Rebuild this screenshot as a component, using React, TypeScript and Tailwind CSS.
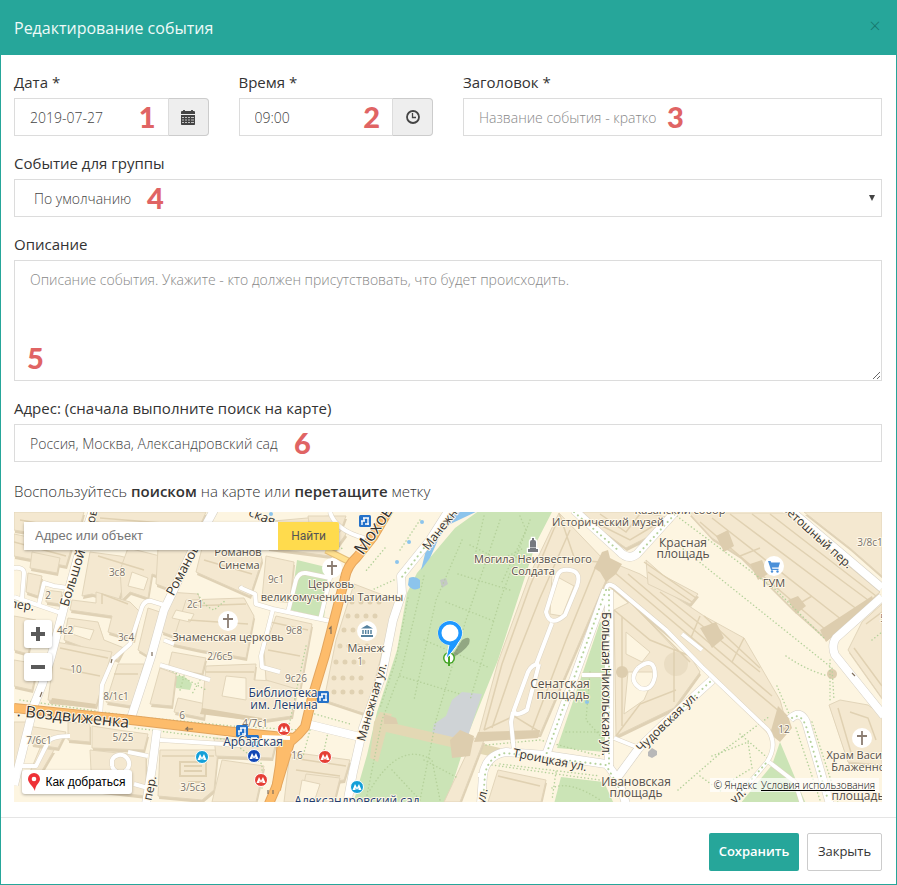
import type { ReactNode } from "react";

const INPUT =
  "block w-full h-[38px] border border-[#dcdcdc] bg-white px-[15px] text-[14px] font-light text-[#444] placeholder:text-[#888] outline-none";

function Marker({ children, className }: { children: ReactNode; className: string }) {
  return (
    <span
      className={`pointer-events-none absolute font-['Lato'] text-[29px] leading-[38px] font-black text-[#e06464] ${className}`}
    >
      {children}
    </span>
  );
}

function Field({ id, label, children }: { id: string; label: string; children: ReactNode }) {
  return (
    <div>
      <label htmlFor={id} className="mb-[7px] block text-[15px] leading-[18px] text-[#333]">
        {label}
      </label>
      <div className="relative flex">{children}</div>
    </div>
  );
}

function CalendarIcon() {
  return (
    <svg width="14" height="15" viewBox="0 0 14 15" fill="#444" aria-hidden="true">
      <path d="M0 2.2Q0 1 1 1H2V.5Q2 0 2.500 0h1Q4 0 4 .5V1h6V.5q0-.5.5-.5h1q.5 0 .5.5V1h1q1 0 1 1.200V4H0z" />
      <path d="M0 5h14v9.200q0 .8-.8.8H.8Q0 15 0 14.200z" />
      <path
        d="M1 7.500h2M4 7.500h2M7 7.500h2M10 7.500h3M1 10h2M4 10h2M7 10h2M10 10h3M1 12.500h2M4 12.500h2M7 12.500h2M10 12.500h3"
        stroke="#d0d0d0"
        strokeWidth=".9"
      />
    </svg>
  );
}

function ClockIcon() {
  return (
    <svg width="14" height="14" viewBox="0 0 14 14" fill="none" stroke="#444" aria-hidden="true">
      <circle cx="7" cy="7" r="6" strokeWidth="1.800" />
      <path d="M6.500 3v4.500H10" strokeWidth="1.300" />
    </svg>
  );
}

/* Block outlines of the districts, in map coordinates */
const BLOCKS = [
  "14,512 84,512 76,540 14,530",
  "14,534 72,546 66,566 14,556",
  "32,552 60,558 57,573 30,568",
  "28,573 42,576 38,596 26,592",
  "46,590 62,592 60,604 46,602",
  "96,512 206,512 198,530 120,528 92,520",
  "90,552 120,556 150,564 144,590 124,584 118,602 92,594 82,596",
  "128,548 176,560 170,580 152,574 148,598 130,592 122,600 120,570",
  "72,600 96,603 96,592 130,602 140,612 134,640 108,632 112,616 70,610",
  "68,618 98,622 104,640 124,648 118,660 64,640",
  "148,608 160,612 148,656 138,650",
  "56,642 112,652 96,706 48,700",
  "118,664 144,664 132,706 106,702",
  "14,616 36,620 28,654 14,650",
  "14,660 38,664 32,690 14,686",
  "158,548 180,530 190,545 172,590 156,584",
  "206,532 258,540 262,560 250,596 196,572",
  "168,592 198,594 204,612 184,640 162,632",
  "186,600 244,598 254,616 246,658 200,650 172,644",
  "172,652 206,658 202,674 168,668",
  "160,668 176,674 172,706 150,704",
  "178,698 206,704 204,718 174,712",
  "206,666 256,664 254,680 298,682 292,716 264,720 202,710",
  "262,522 330,516 346,534 330,556 268,548",
  "266,556 294,562 290,600 262,598",
  "276,616 312,624 300,690 266,680 264,650",
  "308,516 346,516 340,532 310,530",
  "14,722 26,722 20,760 14,766",
  "28,726 66,732 58,748 32,744",
  "68,722 90,724 90,742 68,740",
  "92,726 118,730 148,734 144,750 92,748",
  "90,750 146,756 146,796 92,790",
  "40,748 54,750 40,774 30,772",
  "160,750 218,750 214,790 202,800 158,796",
  "222,760 264,766 256,802 212,802",
  "214,738 276,742 272,758 216,756",
  "290,752 350,760 344,780 326,782 320,802 284,802",
  "354,584 396,600 366,714 324,700 336,640",
  "306,774 340,778 334,802 300,802",
  "576,512 640,512 672,518 650,536 626,548",
  "559,513 604,560 606,580 540,734 478,736 498,662 530,574",
  "606,560 640,574 662,588 704,616 744,638 780,700 786,722 770,734 702,664 608,584",
  "614,610 630,602 676,650 690,656 700,672 674,708 616,736",
  "689,513 785,513 880,592 826,638 792,608 740,556 712,538",
  "804,512 882,512 882,576 850,548",
  "882,604 862,622 848,650 882,698",
  "829,705 840,700 868,705 882,715 882,765 848,762",
  "646,560 664,576 698,594 690,604 648,584",
  "498,770 546,780 541,802 488,802",
  "474,738 484,740 460,802 444,802",
];

const COURTS = [
  "132,572 148,578 144,590 128,586",
  "626,632 650,652 642,662 626,654",
  "628,672 656,672 644,700 624,714",
  "176,610 194,614 190,622 172,618",
  "226,676 246,678 246,700 222,696",
  "302,780 320,784 314,802 298,802",
  "74,626 94,630 90,640 72,634",
  "552,574 574,586 562,616 550,614",
];

const RIDGES = [
  "M556 524 530 586 502 664 484 730M570 530 540 598 514 664 492 728M596 566 566 640 532 730M559 513 575 560 600 562M484 730 514 716 540 732",
  "M700 522 826 630M712 518 842 620M730 514 858 610M752 514 868 600M770 514 876 596M740 556 760 548M792 608 812 596",
  "M614 572 780 712M628 574 772 696M660 592 760 672M700 616 690 640M744 638 732 662M704 616 760 668",
  "M614 610 650 640 690 656M630 602 690 662M616 736 640 704 676 690M622 616V726M674 650V702",
  "M644 562 696 598M648 572 692 602M866 624 882 612M854 648 882 686",
  "M100 518 200 526M98 556 144 570M20 520 78 530M60 648 108 658M210 540 256 550M204 560 252 574M190 606 246 604",
  "M206 672 254 672M270 622 308 630M268 650 300 656M292 758 346 766M296 770 340 776M162 756 214 756M498 776 540 786",
  "M102 604 102 594 128 604M188 620 248 624M60 668 100 676M114 674 138 674M14 542 66 556M270 526 330 524",
  "M850 712 868 718 876 740M838 708 852 756M586 518 630 540 660 522M600 514 626 532 640 514",
];

const LANES = [
  "M93 510 79 553 64 607 51 657 42 685 34 705 14 785",
  "M214 510 194 547 164 610 151 657 131 718",
  "M157 730 152 768 146 804",
  "M449 510 430 540 401 576 402 593 393 620 382 675 363 728 353 772 347 804",
  "M307 724 360 737",
  "M574 510 619 551Q628 561 637 554L675 512",
  "M790 510 882 588M882 597 836 638Q831 645 835 655L884 716",
  "M606 590 546 755M609 590V768",
  "M481 804 483 775Q486 755 506 752L546 755 606 764Q618 775 626 804",
  "M617 778 639 748 666 722 712 680",
  "M790 719Q800 709 806 722L830 804",
];

const PATHS = [
  "M606 592 Q606 580 616 588L666 630 702 667 768 730Q778 745 767 762L735 800",
  "M14 568Q24 567 24 573L22 598M14 597 61 613M39 604 44 583 54 586 68 588",
  "M114 657 102 685 100 718M112 660 130 644 142 607Q145 600 151 601L164 605",
  "M243 587 241 588 255 594 256 604 273 609 330 621M288 612 296 580Q299 572 306 573L330 578 320 620M273 609 261 656 262 667 280 672",
  "M160 665 210 680M164 640 174 644M160 740 240 745 290 738",
  "M20 766 36 766 48 742Q52 736 70 736M134 784 148 788M128 752 148 756",
  "M563 570Q583 568 577 586L565 615Q550 628 546 612L556 580Q558 571 563 570M552 623 536 665M539 664 527 710Q514 718 514 710L528 672Q532 664 539 664M513 712 511 722 514 752",
  "M582 675H609M614 738 639 748M769 762 795 782 802 804M682 634 702 650",
  "M638 668Q655 655 655 676 652 692 640 688 628 680 638 668M478 775 483 775",
  "M330 512Q335 530 364 538",
  "M112 766V760A9 9 0 1 1 124 772A9 9 0 0 1 112 766",
];

const DOTS = [
  "M408 598 396 660 380 708M424 576 416 610 402 668 382 720 366 800M462 540 436 600 414 700M500 520 466 620 436 720 420 800M530 520 500 600 470 700",
  "M470 545 500 560 524 548M458 574 510 590M446 602 496 622M424 640 490 668M400 676 460 694M520 516 526 530 502 582M484 516 474 560",
  "M370 790Q400 740 432 760L440 800M424 760 458 778M392 770 420 800M394 580 372 590M385 548 365 572M420 520 400 550",
  "M672 540 832 668 834 700M674 514 776 590 826 640M830 660V700M777 686 790 716M786 656Q806 670 828 676",
  "M486 745 540 740 600 756M492 765 600 780M556 772 552 800M500 764 600 776",
  "M606 595 548 752M566 732H604M590 672 586 720 606 742M552 788Q570 780 600 800",
  "M678 790 724 750 770 716M700 776 722 792M712 756 748 742 752 768 716 790M740 734 770 760",
  "M20 700 130 716 232 726 300 730M135 728 230 740M198 594Q204 606 214 610L226 600",
  "M306 646 288 730M336 600 312 690 308 712 350 724M310 730 302 760M328 732 322 760M336 586 356 588",
  "M330 540 344 550M232 742 262 764 262 790M796 728 820 800M812 722 838 802M872 640 882 632",
  "M170 670 206 690M184 676 180 690M200 680 192 694",
];

const WALK = "stroke-[#b5d19b]";

const HALO = {
  paintOrder: "stroke",
  stroke: "#fff8e8",
  strokeWidth: 2,
  strokeLinejoin: "round",
} as const;

type Label = [text: string, x: number, y: number, size: number, angle?: number];

const PLACES: Label[] = [
  ["Романов", 238, 556, 11],
  ["Синема", 239, 569, 11],
  ["Церковь", 331, 588, 11],
  ["великомученицы Татианы", 332, 601, 11],
  ["Знаменская церковь", 228, 641, 11],
  ["Манеж", 366, 652, 11],
  ["Исторический музей", 608, 526, 11],
  ["Казанский собор", 680, 514, 11],
  ["Могила Неизвестного", 533, 563, 11],
  ["Солдата", 533, 575, 11],
  ["Красная", 683, 547, 12],
  ["площадь", 683, 558, 12],
  ["ГУМ", 774, 587, 11],
  ["Сенатская", 560, 688, 12],
  ["площадь", 563, 699, 12],
  ["Ивановская", 636, 786, 12],
  ["площадь", 636, 797, 12],
  ["Храм Василия", 864, 759, 11],
  ["Блаженного", 864, 771, 11],
  ["площадь", 858, 800, 12],
];

const STREETS: Label[] = [
  ["ов", 92, 520, 12, -76],
  ["Большой", 73, 582, 13, -73],
  ["Романов", 183, 574, 13, -62],
  ["пер.", 22, 609, 12, 8],
  ["пер.", 150, 792, 12, -78],
  [". Воздвиженка", 73, 722, 16, 6],
  ["ская", 262, 521, 13, 22],
  ["Мохов", 375, 535, 17, -56],
  ["Манежная", 444, 528, 12, -52],
  ["Манежная ул.", 372, 706, 12, -74],
  ["Большая Никольская ул.", 606, 688, 12, 90],
  ["Троицкая ул.", 550, 764, 12, 11],
  ["Чудовская ул.", 667, 726, 12, -44],
  ["Ветошный пер.", 817, 540, 12, 42],
  ["ул.", 738, 800, 12, -42],
  ["ул.", 482, 800, 12, -76],
];

const NUMBERS: Label[] = [
  ["3с8", 117, 576, 10],
  ["9с1", 276, 583, 10],
  ["2с1", 195, 608, 10],
  ["2", 48, 599, 10],
  ["4с2", 65, 634, 10],
  ["3с4", 126, 641, 10],
  ["9с8", 294, 634, 10],
  ["2/6с5", 220, 660, 10],
  ["10", 76, 673, 10],
  ["9с26", 296, 682, 10],
  ["8/1с1", 116, 700, 10],
  ["6", 182, 719, 10],
  ["4/7с1", 255, 727, 10],
  ["7/6с1", 39, 744, 10],
  ["5/25", 123, 741, 10],
  ["16", 297, 759, 10],
  ["3/5с3", 193, 791, 10],
  ["1", 360, 665, 10],
  ["12", 784, 733, 10],
  ["3/8с1", 870, 546, 10],
  ["5", 883, 622, 10],
];

const STATIONS: Label[] = [
  ["Библиотека", 283, 697, 12],
  ["им. Ленина", 284, 709, 12],
  ["Арбатская", 253, 746, 12],
  ["Александровский сад", 357, 805, 12],
];

function Labels({ items, fill }: { items: Label[]; fill: string }) {
  return (
    <g fill={fill} textAnchor="middle">
      {items.map(([text, x, y, size, angle]) => (
        <text
          key={`${text}-${x}-${y}`}
          x={x}
          y={y}
          fontSize={size}
          transform={angle ? `rotate(${angle} ${x} ${y - 4})` : undefined}
          {...HALO}
        >
          {text}
        </text>
      ))}
    </g>
  );
}

const METRO: [number, number, string][] = [
  [284, 729, "#e53e35"],
  [325, 757, "#e53e35"],
  [261, 780, "#e53e35"],
  [254, 756, "#1147b5"],
  [202, 757, "#139fd8"],
  [357, 787, "#139fd8"],
];

const CROSSES: [number, number][] = [
  [332, 568],
  [228, 621],
  [862, 738],
];

const UNDERPASSES: [number, number][] = [
  [365, 521],
  [323, 697],
  [242, 731],
  [253, 741],
];

function CityMap() {
  return (
    <svg
      viewBox="14 512 868 290"
      preserveAspectRatio="xMidYMid slice"
      className="block h-full w-full font-['Open_Sans']"
      role="img"
      aria-label="Карта"
    >
      <rect x="14" y="512" width="868" height="290" fill="#fdf5e1" />
      <g fill="#cbe4b6">
        <path d="M455 528 417 573 407 593 397 650 377 712 367 755 353 804H446L469 732 498 660 536 543 553 510H480z" />
        <path d="M297 560 330 568 324 618 290 610z" />
        <path d="M600 622 607 625 605 752 557 748 583 672z" />
        <path d="M561 777 604 782 614 804H554z" />
        <path d="M780 742 806 804H740L772 765z" />
        <path d="M175 676Q185 674 192 684L190 690 176 688z" />
      </g>
      <path d="M480 510 446 526 438 540 430 558 421 570 426 550 434 530 444 516 456 510z" fill="#8cc4ec" />
      <path d="M409 578Q415 575 420 580V588Q413 592 408 585z" fill="#8cc4ec" />
      <g fill="#8cc4ec">
        <circle cx="271" cy="514" r="2" />
        <circle cx="422" cy="522" r="2" />
        <circle cx="409" cy="542" r="2" />
        <circle cx="397" cy="562" r="2" />
        <circle cx="587" cy="702" r="2" />
      </g>
      <path d="M462 692 482 694 466 742 430 742 434 724 446 716 452 700z" fill="#cfd3d6" />
      <path d="M440 580 446 578 448 584 442 588z" fill="#c4c9c4" />
      <path d="M380 712 392 714 388 722 500 748 498 758 386 732 378 762 370 758 374 722z" fill="#e3d8b4" />

      <g fill="#dfd1b5" transform="translate(1 3)">
        {BLOCKS.map((points) => (
          <polygon key={points} points={points} />
        ))}
      </g>
      <g fill="#f4e8d0" stroke="#e2d5ba" strokeWidth="1">
        {BLOCKS.map((points) => (
          <polygon key={points} points={points} />
        ))}
      </g>
      <g fill="#fdf5e1" stroke="#e2d5ba" strokeWidth="1">
        {COURTS.map((points) => (
          <polygon key={points} points={points} />
        ))}
      </g>
      <g fill="none" stroke="#e0d1b2" strokeWidth="1.500">
        {RIDGES.map((d) => (
          <path key={d} d={d} />
        ))}
      </g>
      <g fill="#ddcdae">
        <path d="M52 698 96 704 95 708 50 704zM202 708 262 718 262 722 200 714zM478 732 540 730 538 738 474 742z" />
        <path d="M602 552 608 550 610 558 622 564 616 574 606 582 600 572 594 568zM778 706 788 716 792 728 780 742 770 734z" />
        <path d="M460 730 474 736 470 756 452 758 450 740zM700 628 716 622 724 638 712 648z" />
        <path d="M716 536 728 530 734 546 724 552zM750 564 762 560 768 574 758 580zM788 600 798 596 806 606 796 614z" />
        <path d="M820 630 872 596 874 602 826 642zM384 714 396 718 398 724 384 724z" />
        <circle cx="622" cy="672" r="6" />
        <circle cx="832" cy="674" r="5" />
        <circle cx="676" cy="664" r="12" opacity=".4" />
      </g>
      <path
        d="M352 602h34M348 616h34M344 630h36M340 646h34M336 662h34M334 678h32M334 692h28"
        stroke="#e0d1b2"
        strokeWidth="5"
        strokeDasharray="0 9"
        strokeLinecap="round"
      />
      <path d="M180 762h26v14h-26zM184 766h18M184 771h18M188 782h14" fill="none" stroke="#e0d1b2" strokeWidth="2" />

      <g fill="none" strokeWidth="1.500" strokeLinecap="round" strokeDasharray="0.100 3.500" className={WALK}>
        {DOTS.map((d) => (
          <path key={d} d={d} />
        ))}
      </g>

      <g fill="none" strokeLinejoin="round">
        <g stroke="#ddd4c2" strokeWidth="5">
          {PATHS.map((d) => (
            <path key={d} d={d} />
          ))}
        </g>
        <g stroke="#d6d0c4" strokeWidth="9">
          {LANES.map((d) => (
            <path key={d} d={d} />
          ))}
        </g>
        <g stroke="#fff" strokeWidth="4">
          {PATHS.map((d) => (
            <path key={d} d={d} />
          ))}
        </g>
        <g stroke="#fff" strokeWidth="8">
          {LANES.map((d) => (
            <path key={d} d={d} />
          ))}
        </g>
        <g strokeWidth="2" strokeLinecap="round" strokeDasharray="0.100 5" className={WALK}>
          <path d="M606 590 546 755M609 590V768M483 800 485 775Q488 756 506 753L606 765 626 800M639 748 712 680M430 540 402 577M792 718Q800 712 806 726L828 800M735 798 767 762M574 512 619 551M640 552 675 514" />
        </g>
        <path d="M326 550 350 562" stroke="#e5be78" strokeWidth="7" />
        <path d="M326 550 350 562" stroke="#ffe08f" strokeWidth="5" />
        <g stroke="#e3a55e" strokeWidth="10">
          <path d="M390 508 373 537 357 557Q347 566 345 578L325 655 312 698 305 727Q299 735 290 742L277 785 268 806M14 708 131 720 234 732 294 738" />
          <path d="M282 738 280 765 276 790" />
        </g>
        <g stroke="#fdbc6b" strokeWidth="8">
          <path d="M390 508 373 537 357 557Q347 566 345 578L325 655 312 698 305 727Q299 735 290 742L277 785 268 806M14 708 131 720 234 732 294 738" />
          <path d="M282 738 280 765 276 790" />
        </g>
        <path d="M262 737 290 738" stroke="#fff" strokeWidth="4" />
      </g>
      <path
        d="M193 729h-7l2 -2M188 731l-2 -3M331 634v-7l-2 2M268 790v4M273 790v4M40 697l2 -5M111 663l1 -4M152 656v-4M852 673l3 3"
        stroke="#806f5b"
        strokeWidth="1.200"
        fill="none"
      />

      <Labels items={NUMBERS} fill="#76716b" />
      <Labels items={STREETS} fill="#34322f" />

      {UNDERPASSES.map(([x, y]) => (
        <g key={`${x}-${y}`} transform={`translate(${x} ${y})`}>
          <rect x="-6" y="-6" width="12" height="12" rx="1.500" fill="#2572c9" />
          <path d="M-2-3h6M-1-3v3M3-3v7M-4 0h4M0 3h4M-3 0v4" stroke="#fff" strokeWidth="1.400" fill="none" />
        </g>
      ))}
      <Labels items={STATIONS} fill="#223c70" />
      {METRO.map(([x, y, color]) => (
        <g key={`${x}-${y}`} transform={`translate(${x} ${y})`}>
          <circle r="6.500" fill={color} stroke="#fff" />
          <path d="M-4.500 3-2-3 0 .8 2-3 4.500 3H1.500L1.300.8 0 3-1.300.8-1.500 3z" fill="#fff" />
        </g>
      ))}
      {CROSSES.map(([x, y]) => (
        <g key={`${x}-${y}`} transform={`translate(${x} ${y})`}>
          <circle r="10" fill="#fff" />
          <path d="M0-7V7M-5-2H5" stroke="#8b7d72" strokeWidth="1.800" />
        </g>
      ))}
      <g transform="translate(367 631)">
        <circle r="10" fill="#fff" />
        <path d="M-6-2.500 0-6 6-2.500zM-6 4H6V6H-6z" fill="#56829f" />
        <path d="M-4-1V3M-1.300-1V3M1.300-1V3M4-1V3" stroke="#56829f" strokeWidth="1.500" />
      </g>
      <g transform="translate(774 566)">
        <circle r="10" fill="#fff" />
        <path d="M-6-5h2.500l.8 1.500H6L4.500 1.500H-2l.3 1.200H4.500V4H-3z" fill="#4a90d9" />
        <circle cx="-2" cy="5.500" r="1.200" fill="#4a90d9" />
        <circle cx="3.500" cy="5.500" r="1.200" fill="#4a90d9" />
      </g>
      <g transform="translate(533 545)" stroke="#fff" strokeWidth="2.500" paintOrder="stroke" fill="#77797f">
        <path d="M-5 4V7H5V4H3V-3Q3-5 1-5V-7H-1V-5Q-3-5-3-3V4z" />
        <path d="M-4 2.500H4V3H-4z" stroke="none" fill="#fff" />
      </g>
      <path d="M648 752l4-4 5 3v4l-5 3-4-2z" fill="#b8b8b8" />
      <Labels items={PLACES} fill="#55504b" />

      <g>
        <path d="M450 659 462 640Q472 634 469 644 464 652 450 659z" fill="#3d4a36" opacity=".4" />
        <circle cx="449" cy="658" r="6" fill="#46a528" />
        <circle cx="449" cy="658" r="4.500" fill="#fff" />
        <path d="M449 656 449 666" stroke="#46a528" strokeWidth="2" />
        <path
          d="M446 659 449 645A12 12 0 1 1 460 640Q457 646 452 652z"
          fill="#1e98ff"
          stroke="#fff"
          strokeWidth="1"
        />
        <circle cx="450" cy="633" r="12" fill="#1e98ff" />
        <circle cx="450" cy="633" r="8.500" fill="#fff" />
      </g>
    </svg>
  );
}

const OVERLAY = "absolute flex items-center justify-center rounded-[3px] bg-white shadow-[0_1px_3px_rgba(0,0,0,0.3)]";

export default function App() {
  return (
    <form
      className="flex w-full flex-col border border-[#26a69a] bg-white font-['Open_Sans','Noto_Sans',sans-serif]"
      onSubmit={(event) => event.preventDefault()}
    >
      <header className="flex h-[54px] items-center justify-between bg-[#26a69a] px-[13px]">
        <h1 className="text-[16px] leading-[24px] text-[#eefaf8]">Редактирование события</h1>
        <button
          type="button"
          aria-label="Закрыть окно"
          className="flex h-[24px] w-[16px] items-start justify-center text-[20px] leading-[20px] font-light text-[#17766d]"
        >
          ×
        </button>
      </header>

      <main className="flex flex-col gap-[18px] pt-[18px] pr-[14px] pb-[15px] pl-[13px]">
        <div className="grid grid-cols-4 gap-x-[30px]">
          <Field id="date" label="Дата *">
            <input id="date" defaultValue="2019-07-27" className={`${INPUT} min-w-0 flex-1`} />
            <button
              type="button"
              aria-label="Выбрать дату"
              className="flex h-[38px] w-[40px] shrink-0 items-center justify-center rounded-r-[4px] border border-l-0 border-[#ccc] bg-[#eee]"
            >
              <CalendarIcon />
            </button>
            <Marker className="right-[53px]">1</Marker>
          </Field>
          <Field id="time" label="Время *">
            <input id="time" defaultValue="09:00" className={`${INPUT} min-w-0 flex-1`} />
            <button
              type="button"
              aria-label="Выбрать время"
              className="flex h-[38px] w-[40px] shrink-0 items-center justify-center rounded-r-[4px] border border-l-0 border-[#ccc] bg-[#eee]"
            >
              <ClockIcon />
            </button>
            <Marker className="right-[53px]">2</Marker>
          </Field>
          <div className="col-span-2">
            <Field id="title" label="Заголовок *">
              <input id="title" placeholder="Название события - кратко" className={INPUT} />
              <Marker className="left-[204px]">3</Marker>
            </Field>
          </div>
        </div>

        <Field id="group" label="Событие для группы">
          <select
            id="group"
            className="block h-[38px] w-full appearance-none border border-[#dcdcdc] bg-white px-[19px] text-[14px] font-light text-[#444] outline-none"
          >
            <option>По умолчанию</option>
          </select>
          <Marker className="left-[133px]">4</Marker>
          <svg
            width="6"
            height="6"
            viewBox="0 0 6 6"
            className="pointer-events-none absolute top-[16px] right-[7px]"
            aria-hidden="true"
          >
            <path d="M0 0h6L3 6z" fill="#444" />
          </svg>
        </Field>

        <Field id="description" label="Описание">
          <textarea
            id="description"
            placeholder="Описание события. Укажите - кто должен присутствовать, что будет происходить."
            className="block h-[121px] w-full resize-y border border-[#dcdcdc] bg-white px-[15px] py-[9px] text-[14px] leading-[20px] font-light text-[#444] outline-none placeholder:text-[#888]"
          />
          <Marker className="bottom-[4px] left-[13px]">5</Marker>
        </Field>

        <Field id="address" label="Адрес: (сначала выполните поиск на карте)">
          <input id="address" defaultValue="Россия, Москва, Александровский сад" className={INPUT} />
          <Marker className="left-[280px]">6</Marker>
        </Field>

        <section>
          <p className="mb-[10px] text-[15px] leading-[22px] font-light text-[#333]">
            Воспользуйтесь <strong className="font-semibold">поиском</strong> на карте или{" "}
            <strong className="font-semibold">перетащите</strong> метку
          </p>
          <div className="relative h-[290px] overflow-hidden">
            <CityMap />
            <div className="absolute top-[10px] left-[10px] flex h-[28px] w-[315px] rounded-[2px] shadow-[0_1px_3px_rgba(0,0,0,0.3)]">
              <input
                aria-label="Адрес или объект"
                placeholder="Адрес или объект"
                className="min-w-0 flex-1 bg-white px-[11px] font-['Liberation_Sans'] text-[13px] text-[#333] outline-none placeholder:text-[#757575]"
              />
              <button
                type="button"
                className="w-[61px] rounded-r-[2px] bg-[#ffdb4d] font-['Roboto'] text-[12px] text-[#555]"
              >
                Найти
              </button>
            </div>
            <button
              type="button"
              aria-label="Приблизить"
              className={`${OVERLAY} top-[108px] left-[10px] h-[28px] w-[28px]`}
            >
              <svg width="14" height="14" viewBox="0 0 14 14" aria-hidden="true">
                <path d="M0 7h14M7 0v14" stroke="#5a5a5a" strokeWidth="4" />
              </svg>
            </button>
            <button
              type="button"
              aria-label="Отдалить"
              className={`${OVERLAY} top-[141px] left-[10px] h-[28px] w-[28px]`}
            >
              <svg width="14" height="14" viewBox="0 0 14 14" aria-hidden="true">
                <path d="M0 7h14" stroke="#5a5a5a" strokeWidth="4" />
              </svg>
            </button>
            <button
              type="button"
              className={`${OVERLAY} top-[258px] left-[8px] h-[24px] w-[110px] gap-[5px] font-['Liberation_Sans'] text-[12px] text-black`}
            >
              <svg width="12" height="18" viewBox="0 0 12 18" aria-hidden="true">
                <path d="M6 0a6 6 0 0 1 6 6c0 4-5 6-5 12C5 13 0 10 0 6a6 6 0 0 1 6-6z" fill="#ee3137" />
                <circle cx="6" cy="6" r="2.300" fill="#fff" />
              </svg>
              Как добраться
            </button>
            <div className="absolute right-[3px] bottom-[10px] flex gap-[4px] bg-white/70 px-[4px] text-[10px] leading-[14px] font-light text-black">
              <span>© Яндекс</span>
              <a href="#terms" className="underline">
                Условия использования
              </a>
            </div>
          </div>
        </section>
      </main>

      <footer className="flex justify-end gap-[8px] border-t border-[#e5e5e5] px-[14px] pt-[15px] pb-[13px]">
        <button
          type="submit"
          className="h-[38px] w-[90px] rounded-[2px] bg-[#26a69a] text-[13px] font-semibold text-white"
        >
          Сохранить
        </button>
        <button
          type="button"
          className="h-[38px] w-[75px] rounded-[2px] border border-[#ccc] bg-white text-[13px] text-[#333]"
        >
          Закрыть
        </button>
      </footer>
    </form>
  );
}
